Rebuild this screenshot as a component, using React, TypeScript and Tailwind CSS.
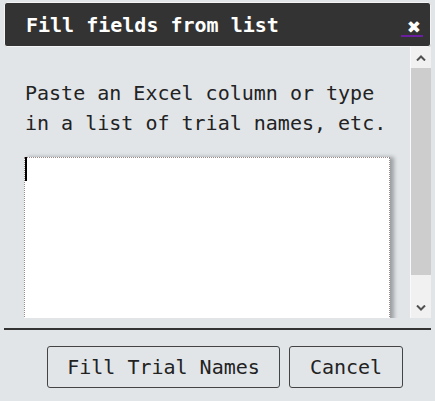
import { useState } from "react";

function Chevron({ up }: { up?: boolean }) {
  return (
    <svg width="10" height="6" viewBox="0 0 10 6" className="block">
      <path
        d={up ? "M1 5.5 L5 1.5 L9 5.5" : "M1 0.5 L5 4.5 L9 0.5"}
        fill="none"
        stroke="#505050"
        strokeWidth="2"
      />
    </svg>
  );
}

export default function App() {
  const [names, setNames] = useState("");

  return (
    <div className="w-[435px] h-[401px] bg-[#e1e5e8] font-['DejaVu_Sans_Mono',monospace] text-[#222] overflow-hidden">
      <div className="mx-[4px] pt-[2px]">
        {/* title bar */}
        <div className="h-[45px] bg-[#333333] border border-[#f4f4f4] rounded-[3px] flex items-center justify-between pl-[21px] pr-[7px]">
          <h3 className="text-[20px] font-bold text-white leading-none">
            Fill fields from list
          </h3>
          <a className="mt-[8px] w-[22px] h-[16px] flex items-center justify-end pr-[2px] border-b-2 border-[#6b1fa0] text-white text-[17px] leading-none cursor-pointer font-['DejaVu_Sans',sans-serif]">
            ✖
          </a>
        </div>

        {/* scrollable body */}
        <div className="h-[271px] flex">
          <div className="flex-1 overflow-hidden pl-[20px] pt-[31px]">
            <p className="text-[20px] leading-[30px] pl-[1px]">
              Paste an Excel column or type
              <br />
              in a list of trial names, etc.
            </p>
            <div className="relative mt-[19px] w-[366px]">
              <textarea
                value={names}
                onChange={(e) => setNames(e.target.value)}
                className="block w-[366px] h-[220px] bg-white border border-dotted border-[#9c8a8a] shadow-[4px_0_4px_rgba(0,0,0,0.3)] resize-none outline-none p-0"
              />
              <span className="absolute left-[1px] top-0 w-[2px] h-[24px] bg-black" />
            </div>
          </div>
          <div className="w-[21px] bg-[#f1f1f1] border-l border-[#fafafa] flex flex-col">
            <div className="h-[21px] flex items-center justify-center">
              <Chevron up />
            </div>
            <div className="h-[207px] bg-[#cdcdcd]" />
            <div className="flex-1 flex items-end justify-center pb-[7px]">
              <Chevron />
            </div>
          </div>
        </div>

        <div className="mt-[10px] h-[2px] bg-[#333]" />

        {/* actions */}
        <div className="flex justify-end gap-[9px] pt-[16px] pr-[28px]">
          <button className="w-[233px] h-[42px] border border-[#444] rounded-[3px] text-[20px] bg-transparent">
            Fill Trial Names
          </button>
          <button className="w-[114px] h-[42px] border border-[#444] rounded-[3px] text-[20px] bg-transparent">
            Cancel
          </button>
        </div>
      </div>
    </div>
  );
}
